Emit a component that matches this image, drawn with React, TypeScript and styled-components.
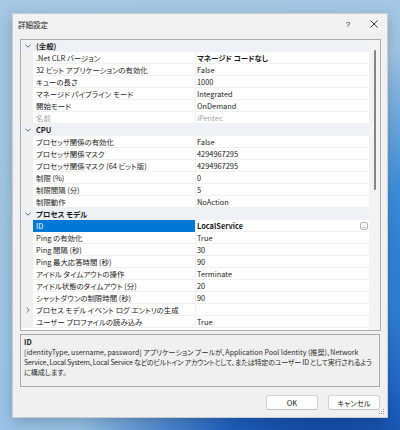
import React from 'react';
import styled, { createGlobalStyle } from 'styled-components';

type Item = {
  name: string;
  value?: string;
  bold?: boolean;
  disabled?: boolean;
  selected?: boolean;
  expandable?: boolean;
};

type Category = { title: string; items: Item[] };

const categories: Category[] = [
  {
    title: '(全般)',
    items: [
      { name: '.Net CLR バージョン', value: 'マネージド コードなし', bold: true },
      { name: '32 ビット アプリケーションの有効化', value: 'False' },
      { name: 'キューの長さ', value: '1000' },
      { name: 'マネージド パイプライン モード', value: 'Integrated' },
      { name: '開始モード', value: 'OnDemand' },
      { name: '名前', value: 'iPentec', disabled: true },
    ],
  },
  {
    title: 'CPU',
    items: [
      { name: 'プロセッサ関係の有効化', value: 'False' },
      { name: 'プロセッサ関係マスク', value: '4294967295' },
      { name: 'プロセッサ関係マスク (64 ビット版)', value: '4294967295' },
      { name: '制限 (%)', value: '0' },
      { name: '制限間隔 (分)', value: '5' },
      { name: '制限動作', value: 'NoAction' },
    ],
  },
  {
    title: 'プロセス モデル',
    items: [
      { name: 'ID', value: 'LocalService', bold: true, selected: true },
      { name: 'Ping の有効化', value: 'True' },
      { name: 'Ping 間隔 (秒)', value: '30' },
      { name: 'Ping 最大応答時間 (秒)', value: '90' },
      { name: 'アイドル タイムアウトの操作', value: 'Terminate' },
      { name: 'アイドル状態のタイムアウト (分)', value: '20' },
      { name: 'シャットダウンの制限時間 (秒)', value: '90' },
      { name: 'プロセス モデル イベント ログ エントリの生成', expandable: true },
      { name: 'ユーザー プロファイルの読み込み', value: 'True' },
    ],
  },
];

const GlobalStyle = createGlobalStyle`
  html, body {
    margin: 0;
    padding: 0;
  }
  body {
    width: 400px;
    height: 430px;
    overflow: hidden;
    font-family: "Noto Sans CJK JP", "Noto Sans", sans-serif;
    font-feature-settings: "palt";
    background:
      radial-gradient(ellipse 260px 170px at 330px 470px, #0c3a8c 0%, #1d5fc0 45%, rgba(60, 140, 220, 0) 100%),
      radial-gradient(ellipse 90px 260px at 420px 300px, #1f6fd0 0%, #3d8fdc 50%, rgba(120, 180, 230, 0) 100%),
      linear-gradient(160deg, #a6c8e4 0%, #9fc6e6 60%, #8ec0ea 100%);
  }
`;

const Page = styled.div`
  padding: 13px 0 0 12px;
`;

const Dialog = styled.div`
  position: relative;
  width: 376px;
  height: 405px;
  box-sizing: border-box;
  border: 1px solid #c9ced4;
  background: #f0f0f0;
  box-shadow: 0 4px 14px rgba(0, 0, 0, 0.22);
  display: flex;
  flex-direction: column;
`;

const TitleBar = styled.div`
  height: 20px;
  display: flex;
  align-items: center;
  padding-left: 5px;
  background: #f2f2f2;
`;

const Title = styled.div`
  flex: 1;
  font-size: 7.5px;
  color: #1a1a1a;
`;

const CaptionButton = styled.div`
  width: 26px;
  height: 20px;
  display: flex;
  align-items: center;
  justify-content: center;
  font-family: "Liberation Sans", sans-serif;
  font-size: 8px;
  color: #222;
`;

const Body = styled.div`
  flex: 1;
  display: flex;
  flex-direction: column;
  padding: 5px 6px 0 7px;
`;

const PropertyGrid = styled.div`
  width: 361px;
  height: 292px;
  box-sizing: border-box;
  border: 1px solid #acacac;
  background: #ffffff;
  display: flex;
`;

const Rows = styled.div`
  flex: 1;
  display: flex;
  flex-direction: column;
`;

const Row = styled.div<{ $category?: boolean }>`
  display: grid;
  grid-template-columns: 12px 162px 1fr;
  height: 12px;
  background: ${(p) => (p.$category ? '#eef2f7' : '#ffffff')};
  font-size: 7.4px;
  line-height: 11px;
  color: #1a1a1a;
  white-space: nowrap;
`;

const Margin = styled.div<{ $category?: boolean }>`
  background: ${(p) => (p.$category ? '#eef2f7' : '#f0f0f0')};
  display: flex;
  align-items: center;
  justify-content: center;
  padding-left: 1px;
`;

const CategoryTitle = styled.div`
  grid-column: 2 / 4;
  padding-left: 3px;
  font-weight: 700;
  line-height: 12px;
`;

const NameCell = styled.div<{ $selected?: boolean; $disabled?: boolean }>`
  box-sizing: border-box;
  border-bottom: 1px solid ${(p) => (p.$selected ? '#0078d7' : '#f0f0f0')};
  padding-left: 3px;
  background: ${(p) => (p.$selected ? '#0078d7' : 'transparent')};
  color: ${(p) => (p.$selected ? '#ffffff' : p.$disabled ? '#a2a2a2' : '#1a1a1a')};
  overflow: hidden;
`;

const ValueCell = styled.div<{ $bold?: boolean; $disabled?: boolean }>`
  box-sizing: border-box;
  border-bottom: 1px solid #f0f0f0;
  border-left: 1px solid #f0f0f0;
  padding-left: 1px;
  padding-right: 1px;
  display: flex;
  align-items: center;
  justify-content: space-between;
  font-weight: ${(p) => (p.$bold ? 700 : 400)};
  color: ${(p) => (p.$disabled ? '#a2a2a2' : '#1a1a1a')};
`;

const EllipsisButton = styled.div`
  width: 8px;
  height: 8px;
  box-sizing: border-box;
  border: 1px solid #b5b5b5;
  border-radius: 2px;
  background: #f6f6f6;
  font-family: "Liberation Sans", sans-serif;
  font-size: 6px;
  line-height: 6px;
  text-align: center;
  color: #333;
  font-weight: 400;
  letter-spacing: -0.5px;
`;

const ScrollBar = styled.div`
  width: 11px;
  background: #f3f3f3;
  display: flex;
  justify-content: center;
  padding-top: 10px;
  box-sizing: border-box;
`;

const Thumb = styled.div`
  width: 2px;
  height: 140px;
  border-radius: 1px;
  background: #858585;
  margin-left: 1px;
`;

const Description = styled.div`
  margin-top: 3px;
  width: 360px;
  height: 53px;
  box-sizing: border-box;
  border: 1px solid #a8a8a8;
  background: #f0f0f0;
  padding: 1px 3px;
  color: #2b2b2b;
  font-size: 7.4px;
  overflow: hidden;
`;

const DescTitle = styled.div`
  font-weight: 700;
  line-height: 11px;
  color: #1a1a1a;
`;

const DescText = styled.div<{ $spacing?: number }>`
  font-size: 7.05px;
  line-height: 10px;
  white-space: nowrap;
  letter-spacing: ${(p) => p.$spacing ?? 0}px;
`;

const ButtonRow = styled.div`
  margin-top: 8px;
  width: 360px;
  display: flex;
  justify-content: flex-end;
  gap: 10px;
`;

const DialogButton = styled.div`
  width: 52px;
  height: 15px;
  box-sizing: border-box;
  border: 1px solid #d3d3d3;
  border-bottom-color: #c2c2c2;
  border-radius: 3px;
  background: #fdfdfd;
  display: flex;
  align-items: center;
  justify-content: center;
  font-size: 7.4px;
  color: #1a1a1a;
`;

const Grip = styled.svg`
  position: absolute;
  right: 2px;
  bottom: 2px;
`;

function Chevron({ open }: { open: boolean }) {
  return open ? (
    <svg width="6" height="4" viewBox="0 0 6 4">
      <polyline points="0.5,0.8 3,3.2 5.5,0.8" fill="none" stroke="#555" strokeWidth="0.9" />
    </svg>
  ) : (
    <svg width="4" height="6" viewBox="0 0 4 6">
      <polyline points="0.8,0.5 3.2,3 0.8,5.5" fill="none" stroke="#666" strokeWidth="0.9" />
    </svg>
  );
}

function CloseIcon() {
  return (
    <svg width="8" height="8" viewBox="0 0 8 8">
      <path d="M0.5 0.5 L7.5 7.5 M7.5 0.5 L0.5 7.5" stroke="#222" strokeWidth="0.9" />
    </svg>
  );
}

function ItemRow({ item }: { item: Item }) {
  return (
    <Row>
      <Margin>{item.expandable && <Chevron open={false} />}</Margin>
      <NameCell $selected={item.selected} $disabled={item.disabled}>
        {item.name}
      </NameCell>
      <ValueCell $bold={item.bold} $disabled={item.disabled}>
        <span>{item.value}</span>
        {item.selected && <EllipsisButton>...</EllipsisButton>}
      </ValueCell>
    </Row>
  );
}

export default function App() {
  return (
    <>
      <GlobalStyle />
      <Page>
        <Dialog>
          <TitleBar>
            <Title>詳細設定</Title>
            <CaptionButton>?</CaptionButton>
            <CaptionButton>
              <CloseIcon />
            </CaptionButton>
          </TitleBar>
          <Body>
            <PropertyGrid>
              <Rows>
                {categories.map((cat) => (
                  <React.Fragment key={cat.title}>
                    <Row $category>
                      <Margin $category>
                        <Chevron open />
                      </Margin>
                      <CategoryTitle>{cat.title}</CategoryTitle>
                    </Row>
                    {cat.items.map((item) => (
                      <ItemRow key={item.name} item={item} />
                    ))}
                  </React.Fragment>
                ))}
              </Rows>
              <ScrollBar>
                <Thumb />
              </ScrollBar>
            </PropertyGrid>
            <Description>
              <DescTitle>ID</DescTitle>
              <DescText>
                [identityType, username, password] アプリケーション プールが、Application Pool Identity (推奨)、Network
              </DescText>
              <DescText $spacing={-0.25}>
                Service、Local System、Local Service などのビルトイン アカウントとして、または特定のユーザー ID として実行されるよう
              </DescText>
              <DescText>に構成します。</DescText>
            </Description>
            <ButtonRow>
              <DialogButton>OK</DialogButton>
              <DialogButton>キャンセル</DialogButton>
            </ButtonRow>
          </Body>
          <Grip width="6" height="6" viewBox="0 0 6 6">
            <rect x="4" y="0" width="1" height="1" fill="#999" />
            <rect x="2" y="2" width="1" height="1" fill="#999" />
            <rect x="4" y="2" width="1" height="1" fill="#999" />
            <rect x="0" y="4" width="1" height="1" fill="#999" />
            <rect x="2" y="4" width="1" height="1" fill="#999" />
            <rect x="4" y="4" width="1" height="1" fill="#999" />
          </Grip>
        </Dialog>
      </Page>
    </>
  );
}
